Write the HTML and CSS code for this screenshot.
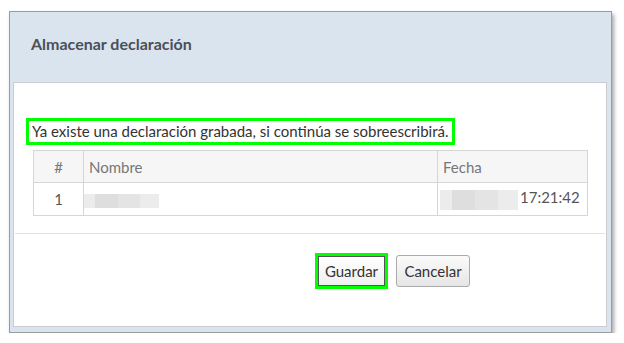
FILE: index.html
```html
<!DOCTYPE html>
<html lang="es">
<head>
  <meta charset="UTF-8" />
  <title>Almacenar declaración</title>
  <link rel="stylesheet" href="styles.css">
</head>
<body>
  <div class="dialog">
    <div class="dialog-title">Almacenar declaración</div>

    <div class="dialog-content">
      <div class="modal-body">
        <p class="notice">Ya existe una declaración grabada, si continúa se sobreescribirá.</p>

        <table class="decl-table">
          <thead>
            <tr>
              <th class="col-num">#</th>
              <th class="col-name">Nombre</th>
              <th class="col-date">Fecha</th>
            </tr>
          </thead>
          <tbody>
            <tr>
              <td class="col-num">1</td>
              <td class="col-name"><span class="blur blur-name"></span></td>
              <td class="col-date"><span class="blur blur-date"></span>17:21:42</td>
            </tr>
          </tbody>
        </table>
      </div>

      <div class="modal-footer">
        <span class="highlight"><button class="btn btn-save">Guardar</button></span>
        <button class="btn btn-cancel">Cancelar</button>
      </div>
    </div>
  </div>
</body>
</html>
```

FILE: styles.css
```css
* {
  margin: 0;
  padding: 0;
  box-sizing: border-box;
}

body {
  font-family: Lato, "Noto Sans", sans-serif;
  background-color: white;
  color: #444;
  padding: 11px 0 0 9px;
}

.dialog {
  width: 603px;
  height: 322px;
  border: 1px solid #9c9c9c;
  background-color: #d9e4ee;
  padding: 0 4px 5px 3px;
  box-shadow: 2px 3px 4px rgba(0, 0, 0, 0.35);
  display: flex;
  flex-direction: column;
}

.dialog-title {
  height: 70px;
  padding: 22px 0 0 18px;
  font-size: 16px;
  font-weight: bold;
  color: #4b4f58;
}

.dialog-content {
  flex: 1;
  background-color: white;
  border: 1px solid #c9cdd2;
}

.modal-body {
  padding: 35px 19px 17px 12px;
}

.notice {
  display: inline-block;
  border: 3px solid #00ff00;
  padding: 0 3px;
  line-height: 21px;
  font-size: 15px;
  color: #333;
}

.decl-table {
  width: 555px;
  margin: 5px 0 0 7px;
  border-collapse: collapse;
  font-size: 15px;
}

.decl-table th,
.decl-table td {
  border: 1px solid #d6d6d6;
  text-align: left;
  font-weight: normal;
  padding: 0 5px;
}

.decl-table th {
  height: 32px;
  background-color: #f6f6f6;
  color: #777;
}

.decl-table td {
  height: 33px;
  color: #555;
}

.decl-table .col-num {
  width: 50px;
  text-align: center;
}

.decl-table .col-date {
  width: 150px;
  padding-left: 2px;
}

.decl-table th.col-date {
  padding-left: 5px;
}

.blur {
  display: inline-block;
  vertical-align: middle;
  background: linear-gradient(to right, #ececec 0, #ececec 15%, #dedede 15%, #dedede 45%, #e4e4e4 45%, #e4e4e4 75%, #ececec 75%);
}

.blur-name {
  width: 75px;
  height: 14px;
  margin-left: -5px;
}

.blur-date {
  width: 78px;
  height: 20px;
  margin-right: 2px;
}

.modal-footer {
  border-top: 1px solid #e2e2e2;
  margin: 0 1px;
  padding: 19px 135px 0 0;
  display: flex;
  justify-content: flex-end;
  align-items: flex-start;
  gap: 8px;
}

.highlight {
  display: inline-block;
  border: 3px solid #00ff00;
}

.btn {
  font-family: Lato, "Noto Sans", sans-serif;
  font-size: 15px;
  color: #333;
  border-radius: 3px;
  cursor: pointer;
}

.btn-save {
  display: block;
  width: 67px;
  height: 30px;
  border: 1px solid #555;
  border-radius: 0;
  background: linear-gradient(#ffffff, #f0f0f0);
}

.btn-cancel {
  width: 74px;
  height: 32px;
  margin-top: 2px;
  border: 1px solid #ababab;
  background: linear-gradient(#fbfbfb, #e6e6e6);
}
```
